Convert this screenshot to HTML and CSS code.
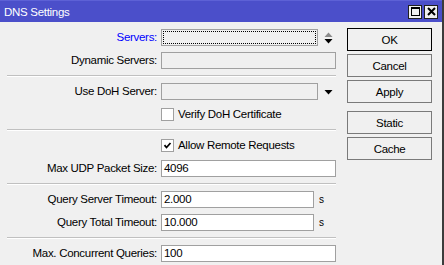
FILE: index.html
```html
<!DOCTYPE html>
<html lang="en">
<head>
  <meta charset="utf-8">
  <title>DNS Settings</title>
  <link rel="stylesheet" href="styles.css">
</head>
<body>
  <div class="window">
    <!-- Title bar -->
    <div class="titlebar">
      <span class="title">DNS Settings</span>
      <div class="title-buttons">
        <span class="tb-btn">
          <svg width="11" height="11" viewBox="0 0 11 11"><rect x="1.5" y="1.5" width="8" height="8" fill="none" stroke="#000" stroke-width="1"/><rect x="1" y="1" width="9" height="2" fill="#000"/></svg>
        </span>
        <span class="tb-btn">
          <svg width="11" height="11" viewBox="0 0 11 11"><path d="M2 2 L9 9 M9 2 L2 9" stroke="#000" stroke-width="2"/></svg>
        </span>
      </div>
    </div>

    <div class="content">
      <!-- Form -->
      <div class="form">
        <div class="label link">Servers:</div>
        <div class="field">
          <div class="input readonly short"><span class="focus-rect"></span></div>
          <svg class="icon" width="10" height="14" viewBox="0 0 10 14"><path d="M0.5 6 L4.5 1.5 L8.5 6 Z" fill="#8a8a8a"/><path d="M0.5 8 L8.5 8 L4.5 12.5 Z" fill="#000"/></svg>
        </div>

        <div class="label">Dynamic Servers:</div>
        <div class="field"><div class="input readonly"></div></div>

        <div class="separator"></div>

        <div class="label">Use DoH Server:</div>
        <div class="field">
          <div class="input readonly short"></div>
          <svg class="icon" width="10" height="14" viewBox="0 0 10 14"><path d="M0.5 5 L8.5 5 L4.5 9.5 Z" fill="#000"/></svg>
        </div>

        <div class="label"></div>
        <div class="field">
          <span class="checkbox"></span>
          <span class="check-text">Verify DoH Certificate</span>
        </div>

        <div class="separator"></div>

        <div class="label"></div>
        <div class="field">
          <span class="checkbox">
            <svg width="9" height="9" viewBox="0 0 9 9"><path d="M1.5 4.2 L3.5 6.5 L7.5 2" fill="none" stroke="#000" stroke-width="1.8"/></svg>
          </span>
          <span class="check-text">Allow Remote Requests</span>
        </div>

        <div class="label">Max UDP Packet Size:</div>
        <div class="field"><div class="input">4096</div></div>

        <div class="separator"></div>

        <div class="label">Query Server Timeout:</div>
        <div class="field"><div class="input timed">2.000</div><span class="unit">s</span></div>

        <div class="label">Query Total Timeout:</div>
        <div class="field"><div class="input timed">10.000</div><span class="unit">s</span></div>

        <div class="separator"></div>

        <div class="label">Max. Concurrent Queries:</div>
        <div class="field"><div class="input">100</div></div>
      </div>

      <!-- Buttons -->
      <div class="buttons">
        <button class="btn default">OK</button>
        <button class="btn">Cancel</button>
        <button class="btn">Apply</button>
        <button class="btn spaced">Static</button>
        <button class="btn">Cache</button>
      </div>
    </div>
  </div>
</body>
</html>
```

FILE: styles.css
```css
* {
  margin: 0;
  padding: 0;
  box-sizing: border-box;
}

body {
  width: 444px;
  height: 265px;
  overflow: hidden;
  background: #f0f0f0;
  font-family: "Liberation Sans", Arial, sans-serif;
  font-size: 11.5px;
  letter-spacing: -0.3px;
  color: #000;
}

.window {
  width: 444px;
  height: 265px;
  border-right: 2px solid #3c3c3c;
  background: #f0f0f0;
}

.titlebar {
  height: 22px;
  background: #4b4fca;
  border-top: 1px solid #5d61d6;
  display: flex;
  align-items: center;
  justify-content: space-between;
  padding: 0 4px 0 4px;
}

.title {
  color: #fff;
  line-height: 20px;
}

.title-buttons {
  display: flex;
  gap: 2px;
}

.tb-btn {
  width: 14px;
  height: 14px;
  background: #f0f0f0;
  border: 1px solid #202020;
  display: flex;
  align-items: center;
  justify-content: center;
}

.content {
  display: flex;
  gap: 11px;
  padding: 7px 0 0 7px;
}

.form {
  display: grid;
  grid-template-columns: 150px 175px;
  column-gap: 4px;
  row-gap: 6px;
  align-items: center;
}

.label {
  text-align: right;
  line-height: 17px;
  height: 17px;
  white-space: nowrap;
}

.label.link {
  color: #0000ff;
}

.field {
  display: flex;
  align-items: center;
  height: 17px;
}

.input {
  position: relative;
  width: 175px;
  height: 17px;
  border: 1px solid #a0a0a0;
  background: #fff;
  padding-left: 2px;
  line-height: 15px;
}

.input.readonly {
  background: #f0f0f0;
}

.input.short {
  width: 157px;
}

.input.timed {
  width: 153px;
}

.focus-rect {
  position: absolute;
  top: 1px;
  left: 1px;
  right: 1px;
  bottom: 1px;
  border: 1px dotted #000;
}

.icon {
  margin-left: 6px;
}

.unit {
  margin-left: 5px;
  font-size: 10px;
}

.checkbox {
  width: 13px;
  height: 13px;
  border: 1px solid #a0a0a0;
  background: #fff;
  display: flex;
  align-items: center;
  justify-content: center;
}

.check-text {
  margin-left: 4px;
  line-height: 17px;
}

.separator {
  grid-column: 1 / -1;
  height: 2px;
  border-top: 1px solid #c0c0c0;
  border-bottom: 1px solid #fff;
}

.buttons {
  display: flex;
  flex-direction: column;
  gap: 3px;
  margin-top: -1px;
}

.btn {
  width: 85px;
  height: 23px;
  background: #f0f0f0;
  border: 1px solid #7a7a7a;
  font-family: inherit;
  font-size: 11.5px;
  letter-spacing: -0.3px;
  color: #000;
}

.btn.default {
  border-color: #000;
}

.btn.spaced {
  margin-top: 5px;
}
```
